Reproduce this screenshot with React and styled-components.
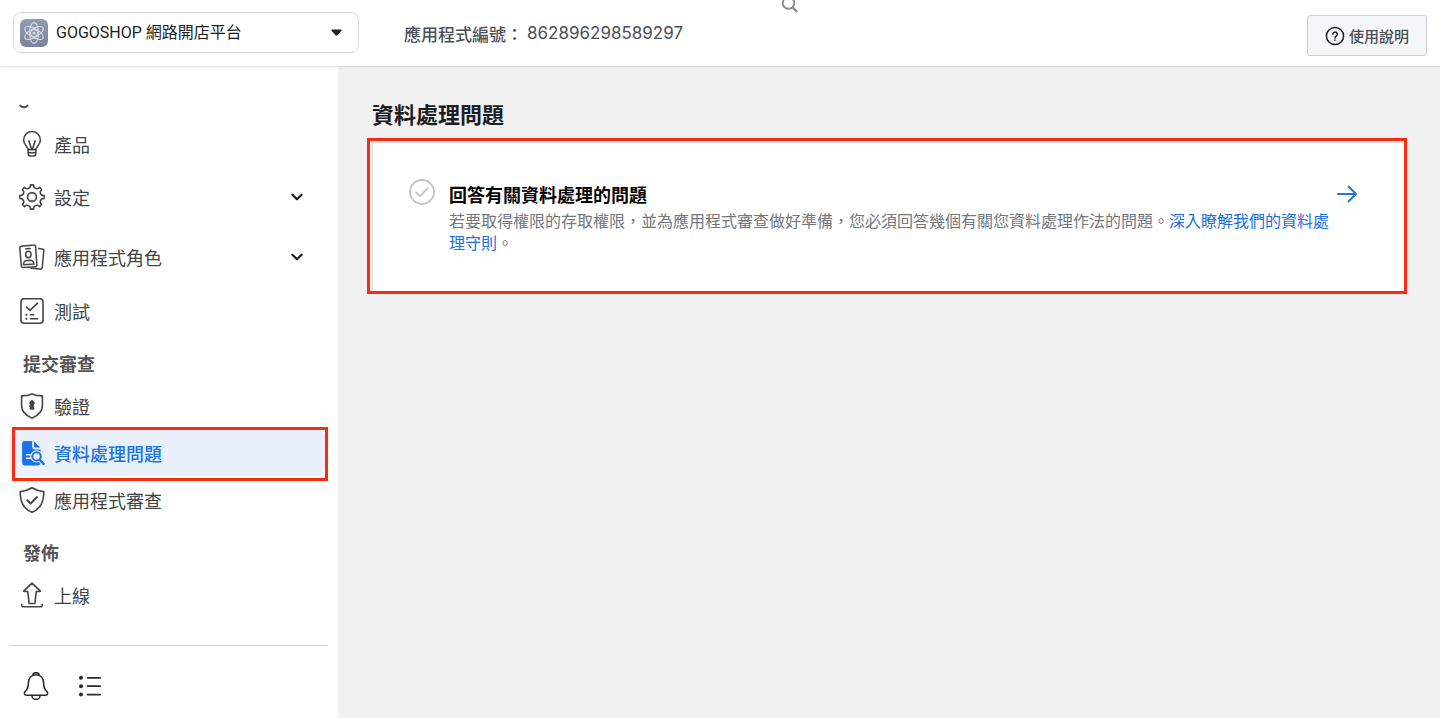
import React from "react";
import styled, { createGlobalStyle } from "styled-components";

const GlobalStyle = createGlobalStyle`
  *, *::before, *::after { box-sizing: border-box; }
  body {
    margin: 0;
    background: #f1f1f1;
    color: #1c1e21;
    font-family: Roboto, "Noto Sans CJK TC", sans-serif;
    font-size: 16px;
  }
  a { text-decoration: none; color: inherit; }
  button, select { font: inherit; color: inherit; }
  svg { display: block; flex: none; }
`;

const Page = styled.div`
  display: flex;
  flex-direction: column;
  min-height: 100vh;
`;

const Header = styled.header`
  display: flex;
  align-items: flex-start;
  height: 66px;
  padding: 0 13px;
  background: #fff;
  box-shadow: 0 1px 2px rgba(0, 0, 0, 0.12);
  z-index: 1;
`;

const AppPicker = styled.label`
  display: flex;
  align-items: center;
  width: 346px;
  height: 41px;
  margin-top: 12px;
  padding: 0 16px 0 6px;
  border: 1px solid #dadada;
  border-radius: 8px;
  background: #fff;
`;

const AppSelect = styled.select`
  flex: 1;
  min-width: 0;
  height: 38px;
  margin-left: 4px;
  padding: 0 4px;
  border: 0;
  background: transparent;
  appearance: none;
  font-size: 16px;
  color: #1c1e21;
`;

const AppId = styled.p`
  display: flex;
  align-items: center;
  gap: 4px;
  height: 66px;
  margin: 0 0 0 45px;
  font-size: 17px;
  font-weight: 500;
  color: #4b4f56;
`;

const AppNumber = styled.span`
  font-family: Inter, sans-serif;
  font-weight: 400;
`;

const SearchButton = styled.button`
  margin: -4px 0 0 98px;
  padding: 0;
  border: 0;
  background: none;
  color: #8a8d91;
`;

const HelpButton = styled.button`
  display: flex;
  align-items: center;
  justify-content: center;
  gap: 4px;
  width: 120px;
  height: 41px;
  margin: 15px 0 0 auto;
  padding: 0;
  border: 1px solid #ccd0d5;
  border-radius: 3px;
  background: #f5f6f7;
  font-size: 15px;
  font-weight: 500;
  color: #4b4f56;
`;

const Body = styled.div`
  display: flex;
  flex: 1;
`;

const Sidebar = styled.aside`
  width: 338px;
  padding: 38px 10px 0 9px;
  background: #fff;
`;

const HiddenRow = styled.div`
  height: 16px;
  padding-left: 10px;
  overflow: hidden;
`;

const NavLabel = styled.h2`
  margin: 0;
  padding: 13px 0 0 14px;
  font-size: 18px;
  line-height: 35px;
  font-weight: 700;
  color: #555;
`;

const NavItem = styled.a`
  position: relative;
  display: flex;
  align-items: center;
  gap: 9px;
  width: 316px;
  height: ${(p) => (p.$tall ? 60 : 47)}px;
  padding: 0 21px 0 10px;
  border: 0;
  background: ${(p) => (p.$active ? "#eaf1fd" : "transparent")};
  border-radius: 8px;
  color: ${(p) => (p.$active ? "#1a73e8" : "#444")};
  font-size: 18px;
  font-weight: ${(p) => (p.$active ? 500 : 400)};
  text-align: left;
`;

const NavText = styled.span`
  flex: 1;
`;

const RowFrame = styled.span`
  position: absolute;
  inset: -2px -3px -5px 3px;
  border: 3px solid #fb2b11;
`;

const Divider = styled.hr`
  height: 1px;
  margin: 27px 0 26px;
  border: 0;
  background: #d3d3d3;
`;

const Tools = styled.div`
  display: flex;
  gap: 27px;
  padding: 0 0 16px 13px;
`;

const ToolButton = styled.button`
  padding: 0;
  border: 0;
  background: none;
  color: #2b2b2b;
`;

const Main = styled.main`
  flex: 1;
  min-width: 0;
  padding: 32px 36px 32px 34px;
`;

const Title = styled.h1`
  margin: 0 0 8px;
  font-size: 22px;
  line-height: 36px;
  font-weight: 700;
  color: #1c1e21;
`;

const Card = styled.section`
  position: relative;
  display: flex;
  padding: 36px 47px 37px 36px;
  border: 1px solid #dddfe2;
  border-right: 0;
  border-bottom: 0;
  border-radius: 3px;
  background: #fff;
`;

const CardFrame = styled.div`
  position: absolute;
  inset: -5px -3px -2px -6px;
  border: 3px solid #fb2b11;
  pointer-events: none;
`;

const CardText = styled.div`
  flex: 1;
  min-width: 0;
  margin-left: 14px;
`;

const CardTitle = styled.h2`
  margin: 0;
  padding-top: 2px;
  font-size: 18px;
  line-height: 30px;
  font-weight: 700;
  color: #050505;
`;

const CardBody = styled.p`
  margin: 0;
  font-size: 16px;
  line-height: 22px;
  color: #737880;
`;

const TextLink = styled.a`
  color: #216fdb;
`;

const ArrowLink = styled.a`
  padding-top: 5px;
  color: #2374e1;
`;

const Icon = ({ size = 26, width = 1.6, children, ...rest }) => (
  <svg
    width={size}
    height={size}
    viewBox={`0 0 ${size} ${size}`}
    fill="none"
    stroke="currentColor"
    strokeWidth={width}
    strokeLinecap="round"
    strokeLinejoin="round"
    aria-hidden="true"
    {...rest}
  >
    {children}
  </svg>
);

const AtomLogo = () => (
  <svg width="28" height="28" viewBox="0 0 28 28" fill="none" aria-hidden="true">
    <defs>
      <linearGradient id="atom" x1="0" y1="0" x2="0" y2="1">
        <stop offset="0" stopColor="#939db0" />
        <stop offset="1" stopColor="#78829a" />
      </linearGradient>
    </defs>
    <rect width="28" height="28" rx="6" fill="url(#atom)" />
    <g stroke="#d3d9e4" strokeWidth="1.1">
      {[0, 60, 120].map((a) => (
        <ellipse key={a} cx="14" cy="14" rx="4.4" ry="10.4" transform={`rotate(${a} 14 14)`} />
      ))}
      <circle cx="14" cy="14" r="3.4" />
    </g>
    <circle cx="14" cy="14" r="1.6" fill="#d3d9e4" />
  </svg>
);

const BulbIcon = () => (
  <Icon>
    <path d="M9.2 18.6C9 15.6 4.6 14 4.6 8.9a8.4 8.4 0 0 1 16.8 0c0 5.1-4.4 6.7-4.6 9.7z" />
    <path d="M9.2 18.6v3.6c0 1.6.8 2.8 2.2 2.8h3.2c1.4 0 2.2-1.2 2.2-2.8v-3.6M9.4 21.8h7.2M9.9 9.8l2.6 8.4h1l2.6-8.4" />
  </Icon>
);

const polar = (r, deg) => {
  const a = (deg * Math.PI) / 180;
  return `${(13 + r * Math.sin(a)).toFixed(2)} ${(13 - r * Math.cos(a)).toFixed(2)}`;
};

const gearPath =
  Array.from({ length: 8 }, (_, i) => {
    const a = i * 45;
    return `${i ? "L" : "M"}${polar(12.2, a - 7)} L${polar(12.2, a + 7)} L${polar(9.9, a + 11)} Q${polar(8.7, a + 22.5)} ${polar(9.9, a + 34)}`;
  }).join(" ") + "Z";

const GearIcon = () => (
  <Icon>
    <path d={gearPath} />
    <circle cx="13" cy="13" r="4.4" />
  </Icon>
);

const RolesIcon = () => (
  <Icon width={1.5}>
    <path d="M2.2 2.2 14.8.9a1.6 1.6 0 0 1 1.8 1.5l1.3 18.7a1.6 1.6 0 0 1-1.5 1.7l-12.4.8a1.6 1.6 0 0 1-1.7-1.5L.8 3.9a1.6 1.6 0 0 1 1.4-1.7z" />
    <path d="M6.8 4.8l4.4-.4M19.800 4.600l3.600.4a1.500 1.500 0 0 1 1.400 1.700l-1.600 17a1.500 1.500 0 0 1-1.700 1.400l-9.600-.9" />
    <ellipse cx="9.3" cy="10.5" rx="2.7" ry="3.2" />
    <path d="M4.4 20.8c.2-2.8 1.6-4.2 3.2-4.3l3.6-.2c1.6 0 3.3 1.2 3.8 3.8z" />
  </Icon>
);

const TestIcon = () => (
  <Icon>
    <rect x="2" y="0.8" width="22" height="24.4" rx="3" />
    <path d="M7.6 9.200l3.400 3.200 7.600-7.200M11.400 16.800h3.200M11.400 20.700h7.200" />
    <path d="M7.3 16.8h.2M7.3 20.7h.2" strokeWidth="2" />
  </Icon>
);

const KeyShieldIcon = () => (
  <Icon>
    <path d="M13 .9c3.3 1.3 7 1.9 10.4 2v10.3c0 6-4.8 9.3-10.4 12C7.4 22.500 2.600 19.200 2.600 13.200V2.900C6 2.800 9.700 2.200 13 .9z" />
    <path
      d="M13 7.600a2.400 2.400 0 0 0-1.500 4.200v.5h-.9v1.300h.9v1.600h-.5v1h4v-1h-.5v-3.400A2.400 2.400 0 0 0 13 7.600z"
      fill="currentColor"
      strokeWidth="0.8"
    />
  </Icon>
);

const DataIcon = () => (
  <Icon>
    <path
      fill="currentColor"
      stroke="none"
      d="M5.9 1h7.300v5.700c0 1.500 1.200 2.700 2.700 2.700h5.700v13.200a2.800 2.800 0 0 1-2.800 2.800H5.900a2.800 2.800 0 0 1-2.800-2.800V3.800A2.800 2.800 0 0 1 5.900 1zM15 1.200l6.300 6.300h-5.200c-.7 0-1.100-.5-1.100-1.100z"
    />
    <path d="M7.500 14.800h5M7.500 18.300h5" stroke="#eaf1fd" />
    <circle cx="17.600" cy="16.400" r="6.200" fill="#eaf1fd" stroke="none" />
    <path d="M20.400 19.600l4.200 4.400" stroke="#eaf1fd" strokeWidth="4.400" />
    <circle cx="17.600" cy="16.400" r="4.200" strokeWidth="2" />
    <path d="M20.800 19.800l3.800 4.100" strokeWidth="2.400" />
  </Icon>
);

const CheckShieldIcon = () => (
  <Icon>
    <path d="M13 .8c3.600 2.200 7.500 3.500 11.800 3.800-.1 9.700-2.500 16.700-11.800 20.700C3.700 21.300 1.300 14.300 1.200 4.600 5.500 4.300 9.400 3 13 .8z" />
    <path d="M8.300 13.300l3.300 3.200 6.300-6.400" strokeWidth="2" />
  </Icon>
);

const UploadIcon = () => (
  <Icon>
    <path d="M13 1.200L4.800 8.800c-.3.300-.1.700.3.700h3.500c.8 3.800 1.200 8 1.400 12h6c.2-4 .6-8.200 1.400-12h3.500c.4 0 .6-.4.3-.7z" />
    <path d="M2.800 22.200v1.200c0 .9.500 1.400 1.400 1.400h17.600c.9 0 1.400-.5 1.400-1.400v-1.200" />
  </Icon>
);

const BellIcon = () => (
  <Icon size={28}>
    <path d="M14 2.700c-5 0-7.300 3.700-7.500 7.300-.3 5.500-.9 7-3.600 9.700-1.100 1.300-.4 3.500 1.400 3.500h19.400c1.800 0 2.500-2.200 1.400-3.500-2.700-2.700-3.300-4.200-3.600-9.700-.2-3.600-2.500-7.300-7.500-7.300z" />
    <path d="M10.900 3.300a3.100 2.600 0 0 1 6.200 0M9.900 23.400a4.100 4 0 0 0 8.200 0" />
  </Icon>
);

const ListIcon = () => (
  <Icon size={28}>
    <path d="M10.600 5.800h12.600M10.600 14.200h12.600M10.600 22.600h12.600" strokeWidth="1.700" />
    <g fill="currentColor" stroke="none">
      <circle cx="4" cy="5.800" r="2" />
      <circle cx="4" cy="14.200" r="2" />
      <circle cx="4" cy="22.600" r="2" />
    </g>
  </Icon>
);

const ChevronIcon = () => (
  <Icon size={14} width={2.2} color="#1c1e21">
    <path d="M2.4 4.7L7 9.300l4.600-4.600" />
  </Icon>
);

const sections = [
  {
    items: [
      { text: "產品", icon: <BulbIcon /> },
      { text: "設定", icon: <GearIcon />, expandable: true },
      { text: "應用程式角色", icon: <RolesIcon />, expandable: true },
      { text: "測試", icon: <TestIcon /> },
    ],
  },
  {
    label: "提交審查",
    items: [
      { text: "驗證", icon: <KeyShieldIcon /> },
      { text: "資料處理問題", icon: <DataIcon />, active: true },
      { text: "應用程式審查", icon: <CheckShieldIcon /> },
    ],
  },
  { label: "發佈", items: [{ text: "上線", icon: <UploadIcon /> }] },
];

const NavEntry = ({ text, icon, expandable, active }) => (
  <NavItem
    as={expandable ? "button" : "a"}
    href={expandable ? undefined : "#"}
    aria-current={active ? "page" : undefined}
    $tall={expandable}
    $active={active}
  >
    {icon}
    <NavText>{text}</NavText>
    {expandable && <ChevronIcon />}
    {active && <RowFrame />}
  </NavItem>
);

export default function App() {
  return (
    <Page>
      <GlobalStyle />
      <Header>
        <AppPicker>
          <AtomLogo />
          <AppSelect aria-label="應用程式">
            <option>GOGOSHOP 網路開店平台</option>
          </AppSelect>
          <svg width="11" height="7" viewBox="0 0 11 7" aria-hidden="true">
            <path d="M1.200.4h8.600c.8 0 1.100.8.600 1.400L6.400 6.200c-.5.600-1.300.6-1.800 0L.6 1.800C.1 1.200.4.4 1.200.4z" fill="#1c1e21" />
          </svg>
        </AppPicker>
        <AppId>
          應用程式編號：
          <AppNumber>862896298589297</AppNumber>
        </AppId>
        <SearchButton aria-label="搜尋">
          <Icon size={17} width={1.9}>
            <circle cx="7.500" cy="7" r="5.800" />
            <path d="M11.800 11.600l3.600 3.600" strokeWidth="2.400" />
          </Icon>
        </SearchButton>
        <HelpButton>
          <Icon size={20} width={1.5}>
            <circle cx="10" cy="10" r="8.600" stroke="#1c1e21" />
            <path d="M7.900 8.300a2.200 2.200 0 1 1 3.300 1.900c-.8.500-1.200.9-1.200 1.700M10 14.100v.1" stroke="#1c1e21" />
          </Icon>
          使用說明
        </HelpButton>
      </Header>
      <Body>
        <Sidebar>
          <HiddenRow>
            <Icon size={10} width={1.9} color="#444">
              <path d="M1.200 1.600c2 2.200 5.400 2.200 7.400 0" />
            </Icon>
          </HiddenRow>
          <nav>
            {sections.map((section, i) => (
              <div key={i}>
                {section.label && <NavLabel>{section.label}</NavLabel>}
                {section.items.map((item) => (
                  <NavEntry key={item.text} {...item} />
                ))}
              </div>
            ))}
          </nav>
          <Divider />
          <Tools>
            <ToolButton aria-label="通知">
              <BellIcon />
            </ToolButton>
            <ToolButton aria-label="清單">
              <ListIcon />
            </ToolButton>
          </Tools>
        </Sidebar>
        <Main>
          <Title>資料處理問題</Title>
          <Card>
            <Icon color="#bec3c9" width={1.8}>
              <circle cx="13" cy="13" r="12" />
              <path d="M7.200 13.500l3.900 3.700 7.600-8" />
            </Icon>
            <CardText>
              <CardTitle>回答有關資料處理的問題</CardTitle>
              <CardBody>
                若要取得權限的存取權限，並為應用程式審查做好準備，您必須回答幾個有關您資料處理作法的問題。
                <TextLink href="#">深入瞭解我們的資料處理守則</TextLink>。
              </CardBody>
            </CardText>
            <ArrowLink href="#" aria-label="回答有關資料處理的問題">
              <Icon size={20} width={1.8}>
                <path d="M1 10h18M11.500 2.500L19 10l-7.500 7.500" />
              </Icon>
            </ArrowLink>
            <CardFrame />
          </Card>
        </Main>
      </Body>
    </Page>
  );
}
